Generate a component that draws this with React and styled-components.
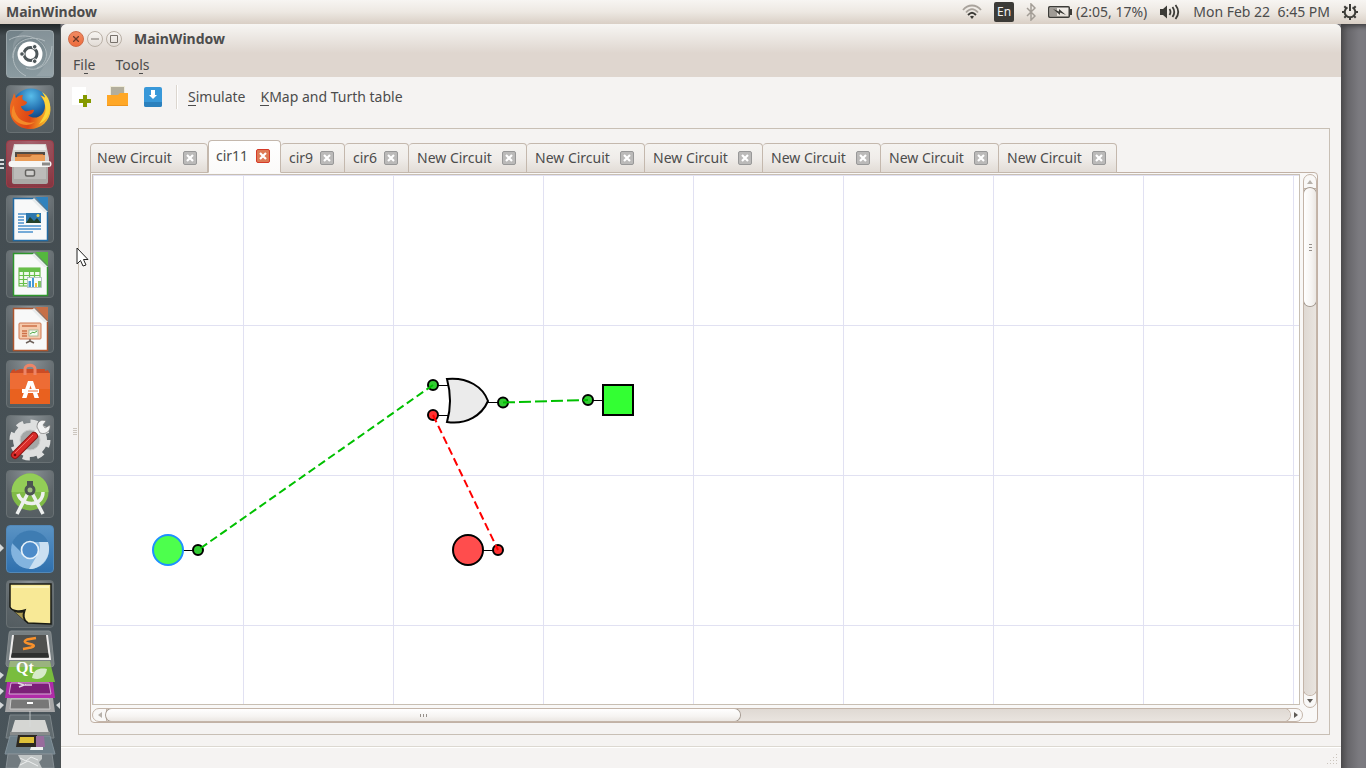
import React from "react";
import styled, { createGlobalStyle } from "styled-components";

const GlobalStyle = createGlobalStyle`
  * { box-sizing: border-box; }
  body {
    margin: 0;
    font-family: "Noto Sans", "Open Sans", sans-serif;
    font-size: 14px;
    line-height: 20px;
    color: #4c4c4c;
  }
  button { font: inherit; color: inherit; border: 0; padding: 0; background: none; }
  svg { display: block; flex: none; }
  u { text-decoration: none; box-shadow: 0 -1px 0 #4c4c4c inset; display: inline-block; line-height: 18px; }
`;

/* ---------- shell ---------- */

const Desktop = styled.div`
  position: relative;
  display: flex;
  flex-direction: column;
  height: 100vh;
  min-height: 600px;
  overflow: hidden;
  background: #77767a;
`;

const Panel = styled.header`
  display: flex;
  align-items: center;
  flex: none;
  height: 24px;
  padding: 0 8px 0 6px;
  background: linear-gradient(#f7f5f2, #ede8e2 50%, #d9cfc5);
`;

const PanelTitle = styled.strong`
  flex: 1;
`;

const Indicator = styled.button`
  display: flex;
  align-items: center;
  gap: 4px;
  height: 24px;
  margin-left: 12px;
  white-space: pre;
`;

const Language = styled.span`
  width: 20px;
  height: 20px;
  border-radius: 2px;
  background: #3c3b37;
  color: #f2f1f0;
  font-size: 12px;
  text-align: center;
`;

const Workspace = styled.div`
  display: flex;
  flex: 1;
  min-height: 0;
`;

const Launcher = styled.nav`
  display: flex;
  flex-direction: column;
  align-items: center;
  flex: none;
  width: 61px;
  padding-top: 6px;
  padding-right: 1px;
  overflow: hidden;
  background: linear-gradient(#22282a, #434b4f 12px, #49545a);
  border-right: 1px solid #4a4f51;
`;

const TileList = styled.div`
  display: grid;
  gap: 7px;
  margin-bottom: 1px;
`;

const Tile = styled.button`
  position: relative;
  flex: none;
  width: 48px;
  height: 48px;
  border: 1px solid ${(p) => p.$edge || "#697174"};
  border-radius: 4px;
  background: ${(p) => p.$fill || "radial-gradient(circle at 50% 0, #8b9296, #5c6468 60%, #535c60)"};
`;

const RunningMark = styled.span`
  position: absolute;
  left: -7px;
  top: 18px;
  display: grid;
  gap: 2px;
  i { width: 4px; height: 2px; background: #d5d9da; }
  b {
    border: solid transparent;
    border-width: 4px 0 4px 4px;
    border-left-color: #d5d9da;
  }
`;

const Wallpaper = styled.div`
  flex: none;
  width: 25px;
  background: linear-gradient(90deg, #4b4a4c, #68676b 7px, #7b7a7f 18px, #7b7a80);
  box-shadow: inset 0 6px 5px -4px #3a3a3b;
`;

/* ---------- window ---------- */

const Window = styled.main`
  display: flex;
  flex-direction: column;
  flex: 1;
  min-width: 0;
  background: #f5f3f2;
  border-radius: 6px 6px 0 0;
`;

const WindowHead = styled.div`
  flex: none;
  border-radius: 6px 6px 0 0;
  background: linear-gradient(#f7f6f3, #dfd6cf 29px);
`;

const TitleBar = styled.div`
  display: flex;
  align-items: center;
  gap: 3px;
  height: 29px;
  padding-left: 7px;
  strong { margin-left: 9px; }
`;

const WindowButton = styled.button`
  display: grid;
  place-items: center;
  width: 16px;
  height: 16px;
  border: 1px solid ${(p) => (p.$close ? "#cf6a46" : "#b9b0a6")};
  border-radius: 8px;
  background: ${(p) => (p.$close ? "linear-gradient(#f08a62, #ee6c3c)" : "linear-gradient(#f7f5f2, #e2dcd6)")};
`;

const MenuBar = styled.div`
  display: flex;
  gap: 20px;
  height: 24px;
  padding: 2px 12px;
`;

const MenuItem = styled.button`
  display: block;
  height: 20px;
`;

const ToolBar = styled.div`
  display: flex;
  align-items: center;
  flex: none;
  height: 40px;
  padding-left: 10px;
`;

const ToolButton = styled.button`
  height: 24px;
  margin-right: ${(p) => (p.$text ? 15 : 12)}px;
  white-space: nowrap;
`;

const ToolDivider = styled.span`
  width: 2px;
  height: 24px;
  margin: 0 10px 0 1px;
  border-left: 1px solid #dcd6cf;
  border-right: 1px solid #fff;
`;

const Body = styled.div`
  display: flex;
  align-items: center;
  flex: 1;
  min-height: 0;
  padding: 11px 11px 11px 12px;
`;

const SplitHandle = styled.span`
  display: grid;
  gap: 1px;
  width: 5px;
  i { width: 4px; height: 1px; background: #cbc5be; }
`;

const Frame = styled.section`
  display: flex;
  flex-direction: column;
  align-self: stretch;
  flex: 1;
  min-width: 0;
  padding: 11px;
  border: 1px solid #c8bfb5;
`;

const TabList = styled.div`
  display: flex;
  align-items: flex-end;
  flex: none;
  height: 33px;
  margin-bottom: -1px;
`;

const TabItem = styled.div`
  display: flex;
  align-items: center;
  justify-content: space-between;
  flex: none;
  width: ${(p) => (p.$wide ? 118 : p.$active ? 73 : 64)}px;
  height: ${(p) => (p.$active ? 33 : 30)}px;
  padding: 0 10px 1px ${(p) => (p.$edge ? 6 : p.$active ? 7 : 8)}px;
  border: 1px solid #c4b8ad;
  border-left-width: ${(p) => (p.$edge || p.$active ? 1 : 0)}px;
  border-bottom-color: ${(p) => (p.$active ? "#fcfbfa" : "#c4b8ad")};
  border-radius: 4px 4px 0 0;
  background: ${(p) => (p.$active ? "linear-gradient(#ffffff, #fbfaf9)" : "linear-gradient(#f5f3f1, #f0edea 50%, #e2dcd6)")};
  position: relative;
  z-index: 1;
`;

const TabClose = styled.button`
  display: grid;
  place-items: center;
  width: 14px;
  height: 14px;
  border: 1px solid ${(p) => (p.$active ? "#d63a28" : "#989898")};
  border-radius: 2px;
  background: ${(p) => (p.$active ? "#dd7a55" : "#bbbab9")};
`;

const Pane = styled.div`
  display: grid;
  grid-template-columns: 1fr 14px;
  grid-template-rows: 1fr 14px;
  gap: 3px;
  flex: 1;
  min-height: 0;
  padding: 1px 0 0 1px;
  border: 1px solid #c1b1a5;
  border-radius: 0 4px 4px 4px;
  background: #f9f8f7;
`;

const CanvasView = styled.div`
  min-width: 0;
  min-height: 0;
  overflow: hidden;
  border: 1px solid #c8bfb3;
  background: #fff;
  svg { width: 100%; height: 100%; }
`;

const ScrollBar = styled.div`
  display: flex;
  flex-direction: ${(p) => (p.$vertical ? "column" : "row")};
  min-width: 0;
  min-height: 0;
  margin: ${(p) => (p.$vertical ? "0 0 -3px" : "0 -3px 0 0")};
  border: 1px solid #c4b5a9;
  border-radius: 7px;
  background: #f9f8f7;
  overflow: hidden;
`;

const ScrollArrow = styled.button`
  display: grid;
  place-items: center;
  flex: 0 0 ${(p) => (p.$start ? 14 : 12)}px;
  min-width: 12px;
  min-height: 12px;
`;

const Track = styled.div`
  display: flex;
  flex-direction: ${(p) => (p.$vertical ? "column" : "row")};
  flex: 1;
  min-width: 0;
  min-height: 0;
  border-radius: ${(p) => (p.$vertical ? "0 0 6px 6px" : "0 6px 6px 0")};
  box-shadow: 0 0 0 1px #c4b5a9;
  background: linear-gradient(${(p) => (p.$vertical ? "90deg" : "180deg")}, #dfd9d3, #e9e4df);
`;

const Thumb = styled.div`
  display: flex;
  flex-direction: ${(p) => (p.$vertical ? "column" : "row")};
  align-items: center;
  justify-content: center;
  gap: 2px;
  flex: 0 0 ${(p) => p.$size};
  margin: ${(p) => (p.$vertical ? "-1px 0 0" : "0 0 0 -1px")};
  border-radius: 6px;
  box-shadow: 0 0 0 1px #a49a91;
  background: linear-gradient(${(p) => (p.$vertical ? "90deg" : "180deg")}, #ffffff, #f6f4f2 60%, #ebe7e3);
  i {
    width: ${(p) => (p.$vertical ? 3 : 1)}px;
    height: ${(p) => (p.$vertical ? 1 : 3)}px;
    background: #96908a;
  }
`;

const StatusBar = styled.footer`
  display: flex;
  align-items: flex-end;
  justify-content: flex-end;
  flex: none;
  height: 22px;
  padding: 0 2px 2px 0;
  border-top: 1px solid #dcd8d1;
  box-shadow: inset 0 1px 0 #fff;
`;

const Pointer = styled.div`
  position: absolute;
  left: 76px;
  top: 247px;
`;

/* ---------- launcher icons ---------- */

const Icon = ({ children }) => (
  <svg width="46" height="46" viewBox="1 1 46 46">{children}</svg>
);

const DashIcon = () => (
  <Icon>
    <path d="M7 20C10 6 30 2 38 14C44 24 40 38 30 46H47V1H18C10 6 6 12 7 20Z" fill="#b6c1c5" opacity="0.25" />
    <g fill="none" stroke="#c6ced1" strokeWidth="1" opacity="0.7">
      <path d="M3 10C16 2 36 6 40 21C42 29 37 36 31 38" />
      <path d="M7 28C5 14 22 3 39 11M20 46C8 40 4 28 10 17" />
      <path d="M46 16C45 32 34 43 20 38" />
    </g>
    <circle cx="24" cy="24" r="12.500" fill="#fff" />
    <circle cx="24.500" cy="24" r="6.500" fill="none" stroke="#4d5659" strokeWidth="3" />
    <g stroke="#fff" strokeWidth="1">
      <circle cx="16" cy="24" r="2.300" fill="#4d5659" />
      <circle cx="28.700" cy="16.800" r="2.300" fill="#4d5659" />
      <circle cx="28.700" cy="31.200" r="2.300" fill="#4d5659" />
    </g>
  </Icon>
);

const FirefoxIcon = () => (
  <Icon>
    <defs>
      <radialGradient id="globe" cx="0.5" cy="0.2" r="0.8">
        <stop offset="0" stopColor="#58bdea" /><stop offset="0.5" stopColor="#1f69ab" /><stop offset="1" stopColor="#0c2350" />
      </radialGradient>
      <linearGradient id="fox" x1="0" x2="1" y1="0.3" y2="0.5">
        <stop offset="0" stopColor="#ee6a20" /><stop offset="0.55" stopColor="#dd4515" /><stop offset="1" stopColor="#fbc62c" />
      </linearGradient>
    </defs>
    <circle cx="25" cy="22.500" r="19" fill="url(#globe)" />
    <path d="M8 8L10 13C12 11 14 10 17 10C16 12 16 14 17 15L21 17C21 19 18 21 15 21C15 23 17 25 19 26C23 27 25 24 28 25C28 28 24 30 22 30C29 36 39 31 39 21C39 16 36 13 34 10C41 12 45 18 44.500 25C44 36 35 44 24 44C12 44 3 35 4 23C4 17 7 14 8 8Z" fill="url(#fox)" />
    <path d="M36 7C43 11 46 20 43 28C41 34 37 37 33 39C38 32 41 27 39 20C39 16 37 14 35 11C37 11 38 12 39 13C39 11 37 9 36 7Z" fill="#fcd53b" />
    <path d="M8 20C8 32 17 40 29 37C21 43 10 39 6 31C5 27 6 23 8 20Z" fill="#f48a29" />
  </Icon>
);

const FilesIcon = () => (
  <Icon>
    <path d="M8 4H40L43 18V25H5V18Z" fill="#d5d4d1" />
    <path d="M9 5H39L40 10H8Z" fill="#eeedeb" />
    <path d="M9 12H39V22H9Z" fill="#514b45" />
    <path d="M11 14H37V23H11Z" fill="#bf6c31" />
    <path d="M9 17H24L26 15H39V24H9Z" fill="#eb9d58" />
    <path d="M6 25H42V42C42 43 41 44 40 44H8C7 44 6 43 6 42Z" fill="#aaa9a6" />
    <path d="M8 26H40V39H8Z" fill="#bcbbb9" />
    <rect x="2.500" y="21" width="43" height="6" rx="3" fill="#f6f5f4" />
    <rect x="36" y="22.500" width="8" height="3" fill="#8b8a88" />
    <rect x="19.500" y="30" width="9" height="6" rx="1.500" fill="#cfcecc" stroke="#63625f" strokeWidth="1.500" />
  </Icon>
);

const DocumentIcon = ({ color, fold, children }) => (
  <Icon>
    <path d="M29 2H42V16Z" fill={fold} />
    <path d="M7.500 3.500H28L41.500 17V45.500H7.500Z" fill="#f8f9f9" stroke={color} strokeWidth="1.500" />
    <path d="M28 3L42 17H38L26 5Z" fill="#e7ebec" />
    {children}
  </Icon>
);

const WriterArt = () => (
  <>
    <path d="M12 19H20M12 22H18M12 25H18M12 28H18M12 31H35M12 34H35M12 37H27" stroke="#4a91cd" strokeWidth="1.300" />
    <rect x="20" y="18" width="15" height="10" fill="#2d77ad" />
    <path d="M20 28L24 22L28 26L31 23L35 28Z" fill="#22422b" />
    <circle cx="32" cy="20.500" r="1.500" fill="#f2d956" />
  </>
);

const CalcArt = () => (
  <>
    <rect x="13" y="18" width="21" height="18" fill="#f1faec" stroke="#56b436" />
    <path d="M13 21.500H34M13 25.500H34M13 29.500H34M13 33.500H34M17.500 18V36M23.500 18V36M28.500 18V36" stroke="#68bf49" strokeWidth="1.200" />
    <path d="M13 18H34V21H13Z" fill="#68bf49" />
    <rect x="21.500" y="27.500" width="14" height="10" fill="#f8fbfa" stroke="#a9b9b9" strokeWidth="0.800" />
    <path d="M22.500 37V31H25V37" fill="#4698d7" /><path d="M26 37V28H28V37" fill="#4698d7" />
    <path d="M29 37V33H31V37" fill="#f0be32" /><path d="M32 37V31H35V37" fill="#80c468" />
  </>
);

const ImpressArt = () => (
  <>
    <rect x="13" y="18" width="22" height="16" rx="1" fill="#f5caac" stroke="#cf7651" />
    <path d="M16 21H31M16 26H21M16 28.500H21M16 31H21" stroke="#cd7148" strokeWidth="1.300" />
    <rect x="23" y="25" width="9" height="6" fill="#f4fbee" stroke="#9eb290" strokeWidth="0.800" />
    <path d="M24 29L27 27L28 28L31 26" fill="none" stroke="#51a94a" />
    <path d="M24 34V36L20 38M24 36L28 38" fill="none" stroke="#6e625c" strokeWidth="1.500" />
  </>
);

const SoftwareIcon = () => (
  <Icon>
    <path d="M6 10L9 9V11L14 9H35L39 9V11L42 10L44 14H4Z" fill="#cb4c26" />
    <path d="M4 13H44V44H4Z" fill="#ed6c35" />
    <path d="M4 29H44V44H4Z" fill="#e9611f" />
    <path d="M19 15V9C19 4 29 4 29 9V15" fill="none" stroke="#ed8567" strokeWidth="3" />
    <path d="M16 38L22 21H27L33 38H28.500L24.500 25.500L20.500 38ZM16 29H33V33H16Z" fill="#fff" />
    <path d="M22 31H32" stroke="#ed6c35" strokeWidth="1" />
  </Icon>
);

const SettingsIcon = () => (
  <Icon>
    <circle cx="24" cy="25" r="13" fill="none" stroke="#dedfdf" strokeWidth="8" />
    <circle cx="24" cy="25" r="18" fill="none" stroke="#dedfdf" strokeWidth="5" strokeDasharray="7 7.130" />
    <circle cx="24" cy="25" r="10" fill="#a4a7a7" stroke="#c6c8c8" />
    <path d="M29 20L38 11" stroke="#efefef" strokeWidth="6" />
    <path d="M31 12C31 6 36 4 40 6L37 10L39 13L44 10C45 16 40 20 34 18Z" fill="#f2f2f2" stroke="#777" strokeWidth="0.700" />
    <path d="M9 40L28 21" stroke="#8e1514" strokeWidth="8" strokeLinecap="round" />
    <path d="M9 40L28 21" stroke="#d92b2a" strokeWidth="6" strokeLinecap="round" />
    <path d="M9 38L27 20" stroke="#ef6e69" strokeWidth="1" />
    <circle cx="9" cy="40" r="1.300" fill="#620c0b" />
  </Icon>
);

const StudioIcon = () => (
  <Icon>
    <circle cx="24" cy="22" r="18.500" fill="#80ba47" />
    <path d="M5.500 22A18.500 18.500 0 0 1 42.500 22Z" fill="#93cd57" />
    <path d="M22 23L11 44M26 23L37 44" stroke="#eef0ee" strokeWidth="3.500" />
    <path d="M12 24C16 37 37 37 37 22" fill="none" stroke="#eef0ee" strokeWidth="3.500" />
    <rect x="21" y="11" width="6" height="7" fill="#4c5452" />
    <circle cx="24" cy="20" r="4" fill="#a0bd80" stroke="#4c5452" strokeWidth="3" />
  </Icon>
);

const ChromiumIcon = () => (
  <Icon>
    <circle cx="24" cy="25" r="19" fill="#83b4df" />
    <path d="M6 18C13 1 36 2 42 17H24C17 17 15 23 16 28Z" fill="#3e7cb2" />
    <path d="M33 17H42C47 32 34 45 23 44L32 29C35 24 34 20 33 17Z" fill="#cadff1" />
    <circle cx="24" cy="25" r="8.500" fill="#4c8bc9" stroke="#e6f1f9" strokeWidth="1.700" />
  </Icon>
);

const NoteIcon = () => (
  <Icon>
    <path d="M4 4H45V44L22 43C17 40 17 35 19 30C13 32 6 31 4 27Z" fill="#f8e996" stroke="#191a13" strokeWidth="1.500" />
    <path d="M4 28C8 32 14 32 19 30C17 36 18 41 22 44Z" fill="#1e201b" />
    <path d="M9 32C12 33 15 33 17 32.500C16 36 17 38 18 40Z" fill="#ac9b51" />
    <path d="M6 6H43V8H6Z" fill="#fcf4b9" />
  </Icon>
);

const LauncherStack = () => (
  <svg width="60" height="139" viewBox="0 0 60 139" aria-label="Folded applications">
    <path d="M11 2H49Q51 2 51 5L54 35Q54 38 51 38H9Q6 38 6 35L9 5Q9 2 11 2Z" fill="#777f82" stroke="#858c8e" />
    <path d="M14 6H47L50 29H10Z" fill="#50514f" />
    <path d="M13 6L10 30H50L47 6" fill="none" stroke="#eeeceb" strokeWidth="2" />
    <path d="M12 24H48L49 28H11Z" fill="#2f302f" />
    <path d="M36 9L27 10.500Q22 13 28 14.500L32 15.500Q36 17 31 18.500L23 20" fill="none" stroke="#f9912b" strokeWidth="2.500" />
    <path d="M10 33H50L55 53H5Z" fill="#79bd3e" />
    <path d="M10 32H50L51 38H9Z" fill="#9ab37e" />
    <text x="16" y="44" fontFamily="Liberation Serif, serif" fontSize="16" fontWeight="700" fill="#fff">Qt</text>
    <path d="M32 49C34 39 41 39 47 40C46 48 40 52 32 49Z" fill="#d7ebca" />
    <path d="M7 53H53L55 69H5Z" fill="#b02ba8" />
    <path d="M11 54H49L51 65H9Z" fill="#7c2078" stroke="#d6aed6" />
    <path d="M18 54L24 56L19 58M25 56H32" stroke="#e5d6e6" strokeWidth="1.500" fill="none" />
    <path d="M7 69H53L55 83H5Z" fill="#a7a7a7" />
    <path d="M11 70H49L50 80H10Z" fill="#777" stroke="#c9c9c9" />
    <path d="M27 74H33" stroke="#fff" strokeWidth="2" />
    <path d="M10 86H50L54 109H6Z" fill="#616b6f" stroke="#7c8589" />
    <path d="M15 91H45L49 104H11Z" fill="#d5d6d3" />
    <path d="M10 103H50V106H10Z" fill="#888b8b" />
    <path d="M30 82V98" stroke="#d8dcdc" strokeWidth="0.800" />
    <path d="M10 107H50L55 125H5Z" fill="#6e7f88" stroke="#82919a" />
    <path d="M18 106H37V118H16Z" fill="#2c2821" /><path d="M20 108H34V114H19Z" fill="#dec038" />
    <path d="M36 107H44L45 118H36Z" fill="#986c9d" />
    <path d="M31 118H43V121H30Z" fill="#eff1ef" />
    <path d="M8 125H52L54 139H6Z" fill="#727b80" stroke="#879095" />
    <path d="M18 126H42V130L39 133L42 139H18L21 132Z" fill="#c1c5c5" />
    <path d="M20 129L26 132L31 128L38 131M20 136L28 132L38 137" stroke="#eceeee" fill="none" />
    <g fill="#d5d9da">
      <path d="M0 43L4 46L0 50ZM0 59L4 62L0 66ZM0 73L4 76L0 80ZM60 73L56 76L60 80Z" />
    </g>
  </svg>
);

const blueDoc = <DocumentIcon color="#216aa2" fold="#3082bd"><WriterArt /></DocumentIcon>;
const greenDoc = <DocumentIcon color="#2e962d" fold="#55b73e"><CalcArt /></DocumentIcon>;
const orangeDoc = <DocumentIcon color="#ac552e" fold="#c66f47"><ImpressArt /></DocumentIcon>;

const apps = [
  { name: "Dash", icon: <DashIcon />, fill: "linear-gradient(#74838a, #8b9ba1)", edge: "#9aa5a9" },
  { name: "Firefox", icon: <FirefoxIcon /> },
  { name: "Files", icon: <FilesIcon />, fill: "radial-gradient(circle at 50% 0, #a5606b, #85343f)", edge: "#9a3d48", mark: "bars" },
  { name: "Writer", icon: blueDoc },
  { name: "Calc", icon: greenDoc },
  { name: "Impress", icon: orangeDoc },
  { name: "Software Center", icon: <SoftwareIcon /> },
  { name: "System Settings", icon: <SettingsIcon /> },
  { name: "Android Studio", icon: <StudioIcon /> },
  { name: "Chromium", icon: <ChromiumIcon />, fill: "linear-gradient(#5a93c4, #2f70ae)", edge: "#5288b8", mark: "arrow" },
  { name: "Sticky Notes", icon: <NoteIcon /> },
];

/* ---------- panel icons ---------- */

const WifiIcon = () => (
  <svg width="20" height="16" fill="none" strokeWidth="1.800">
    <path d="M1 6C6 0 14 0 19 6" stroke="#a9a39c" />
    <path d="M4 8.500C8 4 12 4 16 8.500" stroke="#a9a39c" />
    <path d="M6 11C9 8 11 8 14 11" stroke="#3c3b37" />
    <path d="M8 12.500Q10 11 12 12.500L10 15Z" fill="#3c3b37" />
  </svg>
);

const BluetoothIcon = () => (
  <svg width="10" height="18" fill="none" stroke="#a39d96" strokeWidth="1.500">
    <path d="M1 5L9 13L5 17V1L9 5L1 13" />
  </svg>
);

const BatteryIcon = () => (
  <svg width="24" height="12">
    <rect x="0.750" y="0.750" width="20.500" height="10.500" rx="1" fill="none" stroke="#3c3b37" strokeWidth="1.500" />
    <path d="M22 3H24V9H22Z" fill="#3c3b37" />
    <rect x="2" y="2" width="7" height="8" fill="#a09b95" />
    <path d="M5 3L11 5.500L11 3L18 9L12 6.500V9Z" fill="#3c3b37" />
  </svg>
);

const VolumeIcon = () => (
  <svg width="22" height="16" viewBox="-1 0 22 16">
    <path d="M0 5H3L7 1.500V14.500L3 11H0Z" fill="#3c3b37" />
    <path d="M9.500 5Q11.500 8 9.500 11M12.500 3Q16 8 12.500 13M15.500 1Q21 8 15.500 15" fill="none" stroke="#3c3b37" strokeWidth="1.800" />
  </svg>
);

const SessionIcon = () => (
  <svg width="16" height="16" fill="none" stroke="#3c3b37">
    <path d="M5.500 3.300A5.300 5.300 0 1 0 10.500 3.300" strokeWidth="2" />
    <path d="M8 0V7" strokeWidth="2" />
    <path d="M0 8H3M13 8H16M8 13V16M2.300 2.300L4 4M13.700 2.300L12 4M2.300 13.700L4 12M13.700 13.700L12 12" strokeWidth="2" />
  </svg>
);

/* ---------- circuit ---------- */

const Pin = ({ x, y, on }) => (
  <circle cx={x} cy={y} r="5" fill={on ? "#33cc33" : "#ff3333"} stroke="#000" strokeWidth="2" />
);

const Circuit = () => (
  <svg role="img" aria-label="Circuit diagram">
    <defs>
      <pattern id="grid" width="150" height="150" patternUnits="userSpaceOnUse">
        <path d="M0.500 0V150M0 0.500H150" stroke="#e1e1f2" />
      </pattern>
    </defs>
    <rect width="100%" height="100%" fill="url(#grid)" />
    <path d="M90 375.500H105M345 210.500H360M345 240.500H360M395 227.500H410M495 225.500H510M390 375.500H405" stroke="#000" />
    <circle cx="75" cy="375" r="15" fill="#4dff4d" stroke="#1e90ff" strokeWidth="2" />
    <circle cx="375" cy="375" r="15" fill="#ff4d4d" stroke="#000" strokeWidth="2" />
    <rect x="510" y="210" width="30" height="30" fill="#33ff33" stroke="#000" strokeWidth="2" />
    <path d="M354 204C375 202 390 212 395 226C389 240 374 250 354 247Q360 226 354 204Z" fill="#ebebeb" stroke="#000" strokeWidth="2" />
    <Pin x={105} y={375} on />
    <Pin x={340} y={210} on />
    <Pin x={340} y={240} />
    <Pin x={410} y={227.5} on />
    <Pin x={495} y={225} on />
    <Pin x={405} y={375} />
    <g fill="none" strokeWidth="2" strokeDasharray="8 4">
      <path d="M340 210L105 375" stroke="#00c000" />
      <path d="M410 227.500L495 225" stroke="#00c000" strokeDasharray="12 4" />
      <path d="M340 240L405 375" stroke="#ff0000" />
    </g>
  </svg>
);

/* ---------- window parts ---------- */

const tabs = [
  "New Circuit", "cir11", "cir9", "cir6", "New Circuit",
  "New Circuit", "New Circuit", "New Circuit", "New Circuit", "New Circuit",
];

const Tab = ({ label, active, edge }) => (
  <TabItem $wide={label.length > 6} $active={active} $edge={edge}>
    <button role="tab" aria-selected={active}>{label}</button>
    <TabClose $active={active} aria-label={`Close ${label}`}>
      <svg width="8" height="8"><path d="M1 1L7 7M7 1L1 7" stroke="#fff" strokeWidth="2.200" /></svg>
    </TabClose>
  </TabItem>
);

const arrows = {
  up: "M3 1L6 5H0Z",
  down: "M0 1H6L3 5Z",
  left: "M1 3L5 0V6Z",
  right: "M1 0L5 3L1 6Z",
};

const Arrow = ({ way, start }) => (
  <ScrollArrow $start={start} aria-label={`Scroll ${way}`}>
    <svg width="6" height="6"><path d={arrows[way]} fill={start ? "#b7b1aa" : "#5f5b57"} /></svg>
  </ScrollArrow>
);

const Scroll = ({ vertical, size }) => (
  <ScrollBar $vertical={vertical}>
    <Arrow way={vertical ? "up" : "left"} start />
    <Track $vertical={vertical}>
      <Thumb $vertical={vertical} $size={size}><i /><i /><i /></Thumb>
    </Track>
    <Arrow way={vertical ? "down" : "right"} />
  </ScrollBar>
);

const SizeGrip = () => (
  <svg width="12" height="12" fill="#cbc5bd">
    {[0, 1, 2, 3].map((r) =>
      Array.from({ length: r + 1 }, (_, c) => (
        <rect key={`${r}-${c}`} x={9 - c * 3} y={r * 3} width="1" height="1" />
      ))
    )}
  </svg>
);

export default function App() {
  return (
    <Desktop>
      <GlobalStyle />
      <Panel>
        <PanelTitle>MainWindow</PanelTitle>
        <Indicator aria-label="Network"><WifiIcon /></Indicator>
        <Indicator><Language>En</Language></Indicator>
        <Indicator aria-label="Bluetooth"><BluetoothIcon /></Indicator>
        <Indicator><BatteryIcon />(2:05, 17%)</Indicator>
        <Indicator aria-label="Volume"><VolumeIcon /></Indicator>
        <Indicator>{"Mon Feb 22  6:45 PM"}</Indicator>
        <Indicator aria-label="Session"><SessionIcon /></Indicator>
      </Panel>
      <Workspace>
        <Launcher>
          <TileList>
            {apps.map((a) => (
              <Tile key={a.name} aria-label={a.name} $fill={a.fill} $edge={a.edge}>
                {a.icon}
                {a.mark && <RunningMark>{a.mark === "bars" ? <><i /><i /><i /></> : <b />}</RunningMark>}
              </Tile>
            ))}
          </TileList>
          <LauncherStack />
        </Launcher>
        <Window>
          <WindowHead>
            <TitleBar>
              <WindowButton $close aria-label="Close">
                <svg width="6" height="6"><path d="M0 0L6 6M6 0L0 6" stroke="#6d3a28" strokeWidth="1.300" /></svg>
              </WindowButton>
              <WindowButton aria-label="Minimize">
                <svg width="8" height="2"><path d="M0 1H8" stroke="#77716b" /></svg>
              </WindowButton>
              <WindowButton aria-label="Maximize">
                <svg width="8" height="8"><path d="M0.500 0.500H7.500V7.500H0.500Z" fill="none" stroke="#77716b" /></svg>
              </WindowButton>
              <strong>MainWindow</strong>
            </TitleBar>
            <MenuBar>
              <MenuItem>Fi<u>l</u>e</MenuItem>
              <MenuItem>Too<u>l</u>s</MenuItem>
            </MenuBar>
          </WindowHead>
          <ToolBar>
            <ToolButton aria-label="New">
              <svg width="24" height="24">
                <path d="M1 2H15V20H1Z" fill="#fff" />
                <path d="M12 10H16V14H20V18H16V22H12V18H8V14H12Z" fill="#859900" />
              </svg>
            </ToolButton>
            <ToolButton aria-label="Open">
              <svg width="24" height="24">
                <path d="M3 1H18V12H3Z" fill="#efebd9" />
                <path d="M4 2H17V12H4Z" fill="#b3ae9c" />
                <path d="M0 10H11L13 8H21V21H0Z" fill="#ffa726" />
                <path d="M0 20H21V21H0Z" fill="#ed941d" />
              </svg>
            </ToolButton>
            <ToolButton aria-label="Save">
              <svg width="20" height="24">
                <rect x="1" y="2" width="18" height="20" rx="2" fill="#3898d9" />
                <path d="M1 17H19V20Q19 22 17 22H3Q1 22 1 20Z" fill="#2b80bd" />
                <path d="M8 5H12V10H14L10 14L6 10H8Z" fill="#fff" />
              </svg>
            </ToolButton>
            <ToolDivider />
            <ToolButton $text><u>S</u>imulate</ToolButton>
            <ToolButton $text><u>K</u>Map and Turth table</ToolButton>
          </ToolBar>
          <Body>
            <SplitHandle><i /><i /><i /><i /></SplitHandle>
            <Frame>
              <TabList role="tablist">
                {tabs.map((label, i) => (
                  <Tab key={i} label={label} active={i === 1} edge={i === 0} />
                ))}
              </TabList>
              <Pane>
                <CanvasView><Circuit /></CanvasView>
                <Scroll vertical size="118px" />
                <Scroll size="634px" />
              </Pane>
            </Frame>
          </Body>
          <StatusBar><SizeGrip /></StatusBar>
        </Window>
        <Wallpaper />
      </Workspace>
      <Pointer>
        <svg width="13" height="21"><path d="M1 1V17L4.500 13.500L7 19L10 18L7.500 12.500H12Z" fill="#fff" stroke="#222" /></svg>
      </Pointer>
    </Desktop>
  );
}
